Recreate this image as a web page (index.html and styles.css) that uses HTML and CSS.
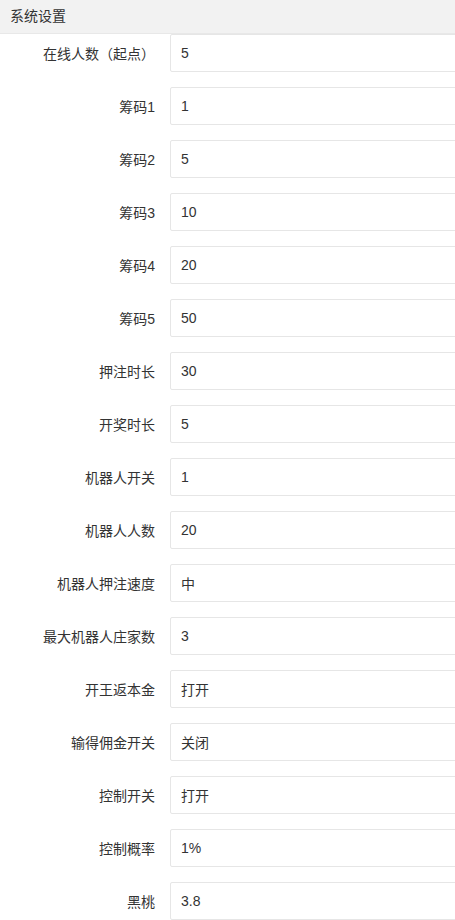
FILE: index.html
```html
<!DOCTYPE html>
<html lang="zh-CN">
<head>
<meta charset="utf-8">
<title>系统设置</title>
<link rel="stylesheet" href="styles.css">
</head>
<body>
<div class="page">
  <div class="card-header">系统设置</div>
  <form class="form">
    <div class="form-item"><label class="form-label">在线人数（起点）</label><div class="input-block"><input class="input" value="5"></div></div>
    <div class="form-item"><label class="form-label">筹码1</label><div class="input-block"><input class="input" value="1"></div></div>
    <div class="form-item"><label class="form-label">筹码2</label><div class="input-block"><input class="input" value="5"></div></div>
    <div class="form-item"><label class="form-label">筹码3</label><div class="input-block"><input class="input" value="10"></div></div>
    <div class="form-item"><label class="form-label">筹码4</label><div class="input-block"><input class="input" value="20"></div></div>
    <div class="form-item"><label class="form-label">筹码5</label><div class="input-block"><input class="input" value="50"></div></div>
    <div class="form-item"><label class="form-label">押注时长</label><div class="input-block"><input class="input" value="30"></div></div>
    <div class="form-item"><label class="form-label">开奖时长</label><div class="input-block"><input class="input" value="5"></div></div>
    <div class="form-item"><label class="form-label">机器人开关</label><div class="input-block"><input class="input" value="1"></div></div>
    <div class="form-item"><label class="form-label">机器人人数</label><div class="input-block"><input class="input" value="20"></div></div>
    <div class="form-item"><label class="form-label">机器人押注速度</label><div class="input-block"><input class="input" value="中"></div></div>
    <div class="form-item"><label class="form-label">最大机器人庄家数</label><div class="input-block"><input class="input" value="3"></div></div>
    <div class="form-item"><label class="form-label">开王返本金</label><div class="input-block"><input class="input" value="打开"></div></div>
    <div class="form-item"><label class="form-label">输得佣金开关</label><div class="input-block"><input class="input" value="关闭"></div></div>
    <div class="form-item"><label class="form-label">控制开关</label><div class="input-block"><input class="input" value="打开"></div></div>
    <div class="form-item"><label class="form-label">控制概率</label><div class="input-block"><input class="input" value="1%"></div></div>
    <div class="form-item"><label class="form-label">黑桃</label><div class="input-block"><input class="input" value="3.8"></div></div>
  </form>
</div>
</body>
</html>
```
FILE: styles.css
```css
html, body {
  margin: 0;
  padding: 0;
  background: #fff;
  overflow: hidden;
}
body {
  font-family: "Liberation Sans", "Noto Sans CJK SC", sans-serif;
  font-size: 14px;
  color: #333;
}
.page {
  width: 455px;
  overflow: hidden;
}
.card-header {
  height: 33px;
  line-height: 33px;
  padding-left: 10px;
  background: #f2f2f2;
  border-bottom: 1px solid #e8e8e8;
  color: #333;
  font-size: 14px;
}
.form {
  margin: 0;
  padding: 0;
}
.form-item {
  display: flex;
  align-items: center;
  margin-bottom: 15px;
  height: 38px;
}
.form-label {
  width: 155px;
  flex: none;
  padding-right: 15px;
  text-align: right;
  color: #333;
  white-space: nowrap;
}
.input-block {
  flex: none;
}
.input {
  box-sizing: border-box;
  display: block;
  width: 320px;
  height: 38px;
  margin: 0;
  padding: 0 10px;
  border: 1px solid #e6e6e6;
  border-radius: 2px;
  background: #fff;
  color: #333;
  font-family: "Liberation Sans", "Noto Sans CJK SC", sans-serif;
  font-size: 14px;
  outline: none;
}
```
